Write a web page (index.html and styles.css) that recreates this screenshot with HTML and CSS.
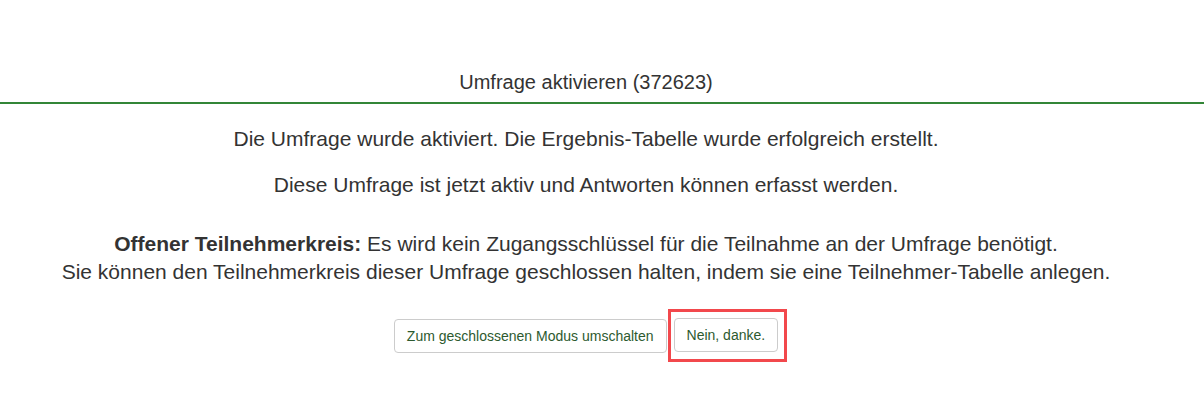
FILE: index.html
```html
<!DOCTYPE html>
<html lang="de">
<head>
<meta charset="utf-8">
<link rel="stylesheet" href="styles.css">
</head>
<body>
<div class="page">
  <h3 class="title">Umfrage aktivieren (372623)</h3>
  <div class="content">
    <p class="msg">Die Umfrage wurde aktiviert. Die Ergebnis-Tabelle wurde erfolgreich erstellt.</p>
    <p class="msg">Diese Umfrage ist jetzt aktiv und Antworten können erfasst werden.</p>
    <p class="info"><strong>Offener Teilnehmerkreis:</strong> Es wird kein Zugangsschlüssel für die Teilnahme an der Umfrage benötigt.<br>Sie können den Teilnehmerkreis dieser Umfrage geschlossen halten, indem sie eine Teilnehmer-Tabelle anlegen.</p>
    <div class="actions">
      <button class="btn">Zum geschlossenen Modus umschalten</button>
      <span class="highlight"><button class="btn">Nein, danke.</button></span>
    </div>
  </div>
</div>
</body>
</html>
```
FILE: styles.css
```css
html, body {
  margin: 0;
  padding: 0;
  background: #fff;
}
body {
  font-family: "Liberation Sans", Arial, sans-serif;
  color: #333;
}
.page {
  padding-top: 68px;
}
.title {
  margin: 0;
  font-size: 20px;
  font-weight: normal;
  line-height: 28px;
  text-align: center;
  padding: 0 32px 6px 0;
  border-bottom: 2px solid #328637;
}
.content {
  text-align: center;
  padding: 21px 32px 0 0;
}
.msg {
  margin: 0 0 18px;
  font-size: 21px;
  line-height: 28px;
}
.info {
  margin: 31px 0 0;
  font-size: 21px;
  line-height: 28px;
}
.actions {
  margin-top: 23px;
  display: flex;
  justify-content: center;
  align-items: center;
  gap: 1px;
  padding-left: 9px;
}
.btn {
  font-family: "Liberation Sans", Arial, sans-serif;
  font-size: 14px;
  color: #2d5a2f;
  background: #fff;
  border: 1px solid #ccc;
  border-radius: 4px;
  height: 34px;
  padding: 0 12px;
  cursor: pointer;
}
.highlight {
  display: inline-flex;
  border: 3px solid #f2484c;
  padding: 6px 6px 7px 3px;
}
```
